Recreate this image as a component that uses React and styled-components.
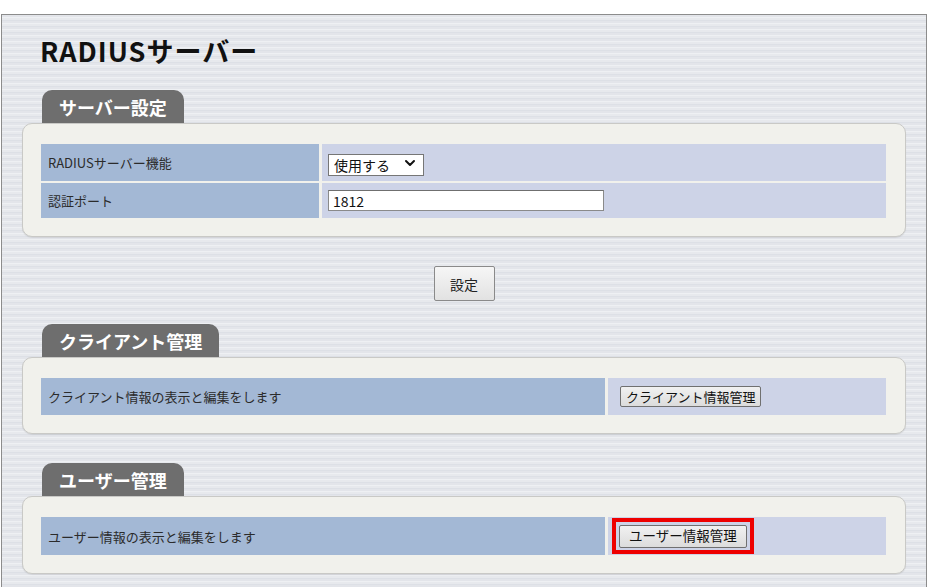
import React from "react";
import styled, { createGlobalStyle } from "styled-components";
import { ChevronDown } from "lucide-react";

const Global = createGlobalStyle`
  html, body { margin: 0; padding: 0; background: #ffffff; }
  body { font-family: "Noto Sans CJK JP", "Noto Sans", sans-serif; color: #333; }
  * { box-sizing: border-box; }
`;

const Frame = styled.div`
  margin: 14px 0 0 1px;
  width: 926px;
  min-height: 600px;
  border: 1px solid #8c8c8c;
  border-bottom: none;
  padding: 0 20px 0 20px;
  background: repeating-linear-gradient(
    180deg,
    #e3e5ea 0px,
    #e3e5ea 2px,
    #eef0f3 2px,
    #eef0f3 3px,
    #e7e9ed 3px,
    #e7e9ed 5px,
    #dde0e6 5px,
    #dde0e6 6px
  );
`;

const Title = styled.h1`
  margin: 0;
  padding: 18px 0 0 18px;
  font-size: 27px;
  line-height: 35px;
  font-weight: 700;
  color: #111;
  letter-spacing: 1px;
`;

const Section = styled.section`
  margin-top: ${(p) => p.$top}px;
`;

const Tab = styled.div`
  display: inline-flex;
  align-items: center;
  margin-left: 20px;
  height: 33px;
  padding: 0 17px;
  background: #6e6e6e;
  border-radius: 10px 10px 0 0;
  color: #ffffff;
  font-size: 18px;
  font-weight: 700;
  line-height: 1;
`;

const Panel = styled.div`
  background: #f1f1ec;
  border: 1px solid #c9c9c6;
  border-radius: 10px;
  box-shadow: 0 1px 1px rgba(0, 0, 0, 0.08);
  padding: 20px 19px 18px 18px;
  display: flex;
  flex-direction: column;
  gap: 2px;
`;

const Row = styled.div`
  display: grid;
  grid-template-columns: ${(p) => p.$label}px 1fr;
  column-gap: 3px;
  height: ${(p) => p.$h || 36}px;
`;

const Label = styled.div`
  background: #a3b8d5;
  display: flex;
  align-items: center;
  padding-left: 7px;
  font-size: 13px;
  color: #2b2b2b;
`;

const Value = styled.div`
  background: #cdd3e7;
  display: flex;
  align-items: center;
  padding-left: ${(p) => p.$pad}px;
`;

const SelectWrap = styled.div`
  position: relative;
  width: 96px;
  height: 22px;
`;

const Select = styled.select`
  appearance: none;
  width: 100%;
  height: 100%;
  border: 1px solid #767676;
  background: #ffffff;
  font-family: "Noto Sans CJK JP", sans-serif;
  font-size: 14px;
  color: #111;
  padding: 0 0 0 5px;
  border-radius: 0;
`;

const Chevron = styled.span`
  position: absolute;
  right: 6px;
  top: 3px;
  pointer-events: none;
  display: flex;
  color: #111;
`;

const TextInput = styled.input`
  width: 276px;
  height: 21px;
  border: 1px solid #8a8a8a;
  border-top-color: #6f6f6f;
  background: #fff;
  font-family: "Noto Sans CJK JP", sans-serif;
  font-size: 14px;
  color: #111;
  padding: 0 4px;
  outline: none;
`;

const Center = styled.div`
  display: flex;
  justify-content: center;
  margin-top: 29px;
`;

const SetButton = styled.button`
  width: 61px;
  height: 35px;
  border: 1px solid #8a8a8a;
  border-radius: 2px;
  background: linear-gradient(180deg, #f6f6f6 0%, #e2e2e2 100%);
  font-family: "Noto Sans CJK JP", sans-serif;
  font-size: 14px;
  color: #222;
  padding: 0;
`;

const SmallButton = styled.button`
  height: ${(p) => p.$h}px;
  padding: 0 ${(p) => p.$px}px;
  border: 1px solid #707070;
  border-radius: 2px;
  background: linear-gradient(180deg, #f1f1f1 0%, #dcdcdc 100%);
  font-family: "Noto Sans CJK JP", sans-serif;
  font-size: ${(p) => p.$fs}px;
  color: #111;
  line-height: 1;
  white-space: nowrap;
`;

const Highlight = styled.span`
  position: relative;
  display: inline-flex;
  &::after {
    content: "";
    position: absolute;
    top: -7px;
    left: -7px;
    right: -7px;
    bottom: -6px;
    border: 4px solid #ee0000;
    pointer-events: none;
  }
`;

export default function App() {
  return (
    <>
      <Global />
      <Frame>
        <Title>RADIUSサーバー</Title>

        <Section $top={22}>
          <Tab>サーバー設定</Tab>
          <Panel>
            <Row $label={278} $h={37}>
              <Label>RADIUSサーバー機能</Label>
              <Value $pad={6}>
                <SelectWrap>
                  <Select defaultValue="use">
                    <option value="use">使用する</option>
                    <option value="no">使用しない</option>
                  </Select>
                  <Chevron>
                    <ChevronDown size={16} strokeWidth={3} />
                  </Chevron>
                </SelectWrap>
              </Value>
            </Row>
            <Row $label={278} $h={35}>
              <Label>認証ポート</Label>
              <Value $pad={6}>
                <TextInput defaultValue="1812" />
              </Value>
            </Row>
          </Panel>
        </Section>

        <Center>
          <SetButton>設定</SetButton>
        </Center>

        <Section $top={23}>
          <Tab>クライアント管理</Tab>
          <Panel>
            <Row $label={564} $h={37}>
              <Label>クライアント情報の表示と編集をします</Label>
              <Value $pad={12}>
                <SmallButton $h={21} $px={5} $fs={13}>
                  クライアント情報管理
                </SmallButton>
              </Value>
            </Row>
          </Panel>
        </Section>

        <Section $top={29}>
          <Tab>ユーザー管理</Tab>
          <Panel>
            <Row $label={564} $h={38}>
              <Label>ユーザー情報の表示と編集をします</Label>
              <Value $pad={11}>
                <Highlight>
                  <SmallButton $h={23} $px={9} $fs={13.5}>
                    ユーザー情報管理
                  </SmallButton>
                </Highlight>
              </Value>
            </Row>
          </Panel>
        </Section>
      </Frame>
    </>
  );
}
